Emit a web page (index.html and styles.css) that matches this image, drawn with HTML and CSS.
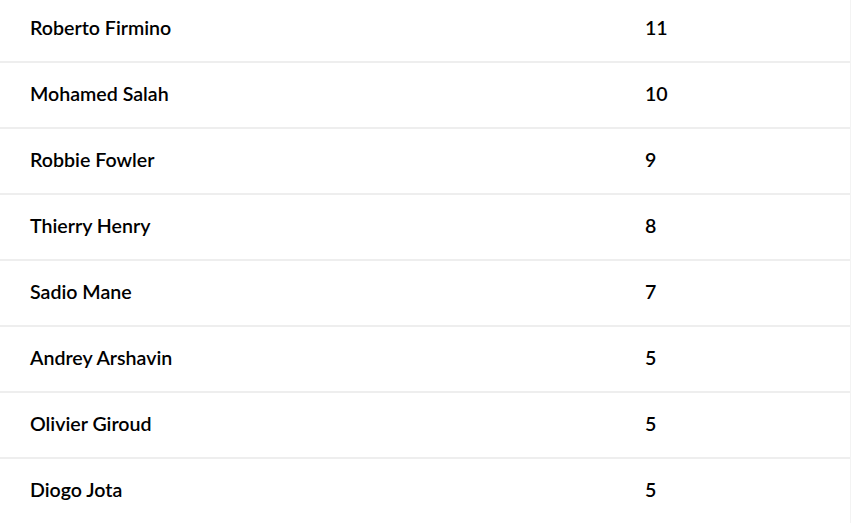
FILE: index.html
```html
<!DOCTYPE html>
<html lang="en">
<head>
<meta charset="utf-8">
<title>Players</title>
<link rel="stylesheet" href="styles.css">
</head>
<body>
<div class="table">
  <div class="row"><span class="name">Roberto Firmino</span><span class="num">11</span></div>
  <div class="row"><span class="name">Mohamed Salah</span><span class="num">10</span></div>
  <div class="row"><span class="name">Robbie Fowler</span><span class="num">9</span></div>
  <div class="row"><span class="name">Thierry Henry</span><span class="num">8</span></div>
  <div class="row"><span class="name">Sadio Mane</span><span class="num">7</span></div>
  <div class="row"><span class="name">Andrey Arshavin</span><span class="num">5</span></div>
  <div class="row"><span class="name">Olivier Giroud</span><span class="num">5</span></div>
  <div class="row"><span class="name">Diogo Jota</span><span class="num">5</span></div>
</div>
</body>
</html>
```
FILE: styles.css
```css
html, body {
  margin: 0;
  padding: 0;
  background: #fff;
  overflow: hidden;
}
.table {
  margin-top: -3px;
  width: 850px;
  border-right: 1px solid #f3f3f3;
  font-family: Lato, "Noto Sans", sans-serif;
  font-size: 19.6px;
  font-weight: 600;
  color: #000;
}
.row {
  display: grid;
  grid-template-columns: 645px 1fr;
  align-items: center;
  box-sizing: border-box;
  height: 66px;
  padding-bottom: 4px;
  border-bottom: 2px solid #eeeeee;
}
.name {
  padding-left: 30px;
}
```
